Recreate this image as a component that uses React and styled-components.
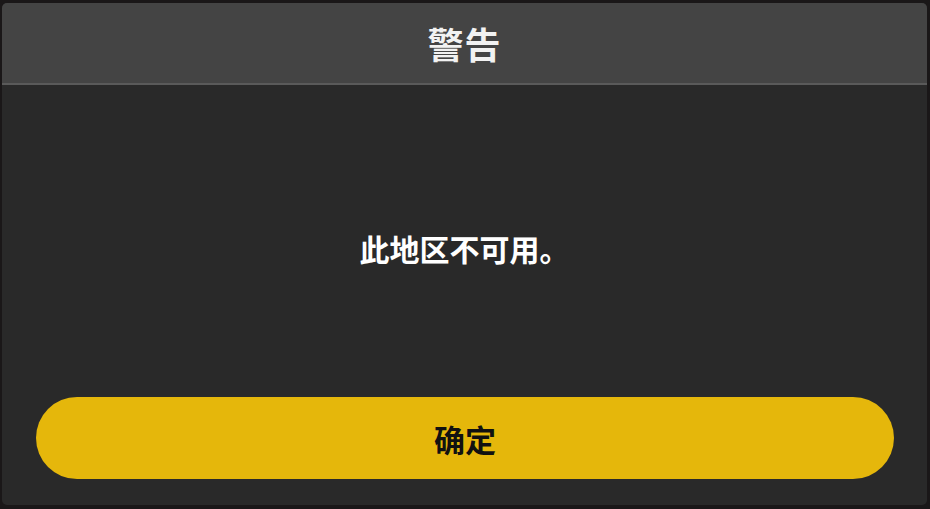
import React from 'react'
import styled, { createGlobalStyle } from 'styled-components'

const GlobalStyle = createGlobalStyle`
  html, body {
    margin: 0;
    padding: 0;
    background: #1a1718;
    font-family: "Noto Sans CJK SC", "Noto Sans", sans-serif;
  }
`

const App = () => {
  return (
    <>
      <GlobalStyle />
      <Page>
        <Dialog>
          <Header>
            <Title>警告</Title>
          </Header>
          <Body>
            <Message>此地区不可用。</Message>
          </Body>
          <Footer>
            <ConfirmButton>确定</ConfirmButton>
          </Footer>
        </Dialog>
      </Page>
    </>
  )
}

export default App

const Page = styled.div`
  width: 930px;
  height: 509px;
  padding: 3px 3px 4px 2px;
  box-sizing: border-box;
  display: flex;
`

const Dialog = styled.div`
  flex: 1;
  display: flex;
  flex-direction: column;
  background: #292929;
  border-radius: 5px;
  overflow: hidden;
`

const Header = styled.div`
  height: 80px;
  background: #444444;
  border-bottom: 2px solid #5a5a5a;
  display: flex;
  align-items: center;
  justify-content: center;
`

const Title = styled.div`
  color: #f2f2f2;
  font-size: 36px;
  font-weight: 700;
  letter-spacing: 1px;
`

const Body = styled.div`
  flex: 1;
  display: flex;
  align-items: center;
  justify-content: center;
`

const Message = styled.div`
  color: #ffffff;
  font-size: 30px;
  font-weight: 700;
  margin-top: 14px;
`

const Footer = styled.div`
  padding: 0 33px 26px 34px;
`

const ConfirmButton = styled.button`
  width: 100%;
  height: 82px;
  border: 0;
  outline: none;
  border-radius: 41px;
  background: #e5b70b;
  color: #111111;
  font-family: "Noto Sans CJK SC", "Noto Sans", sans-serif;
  font-size: 31px;
  font-weight: 700;
  cursor: pointer;
`
